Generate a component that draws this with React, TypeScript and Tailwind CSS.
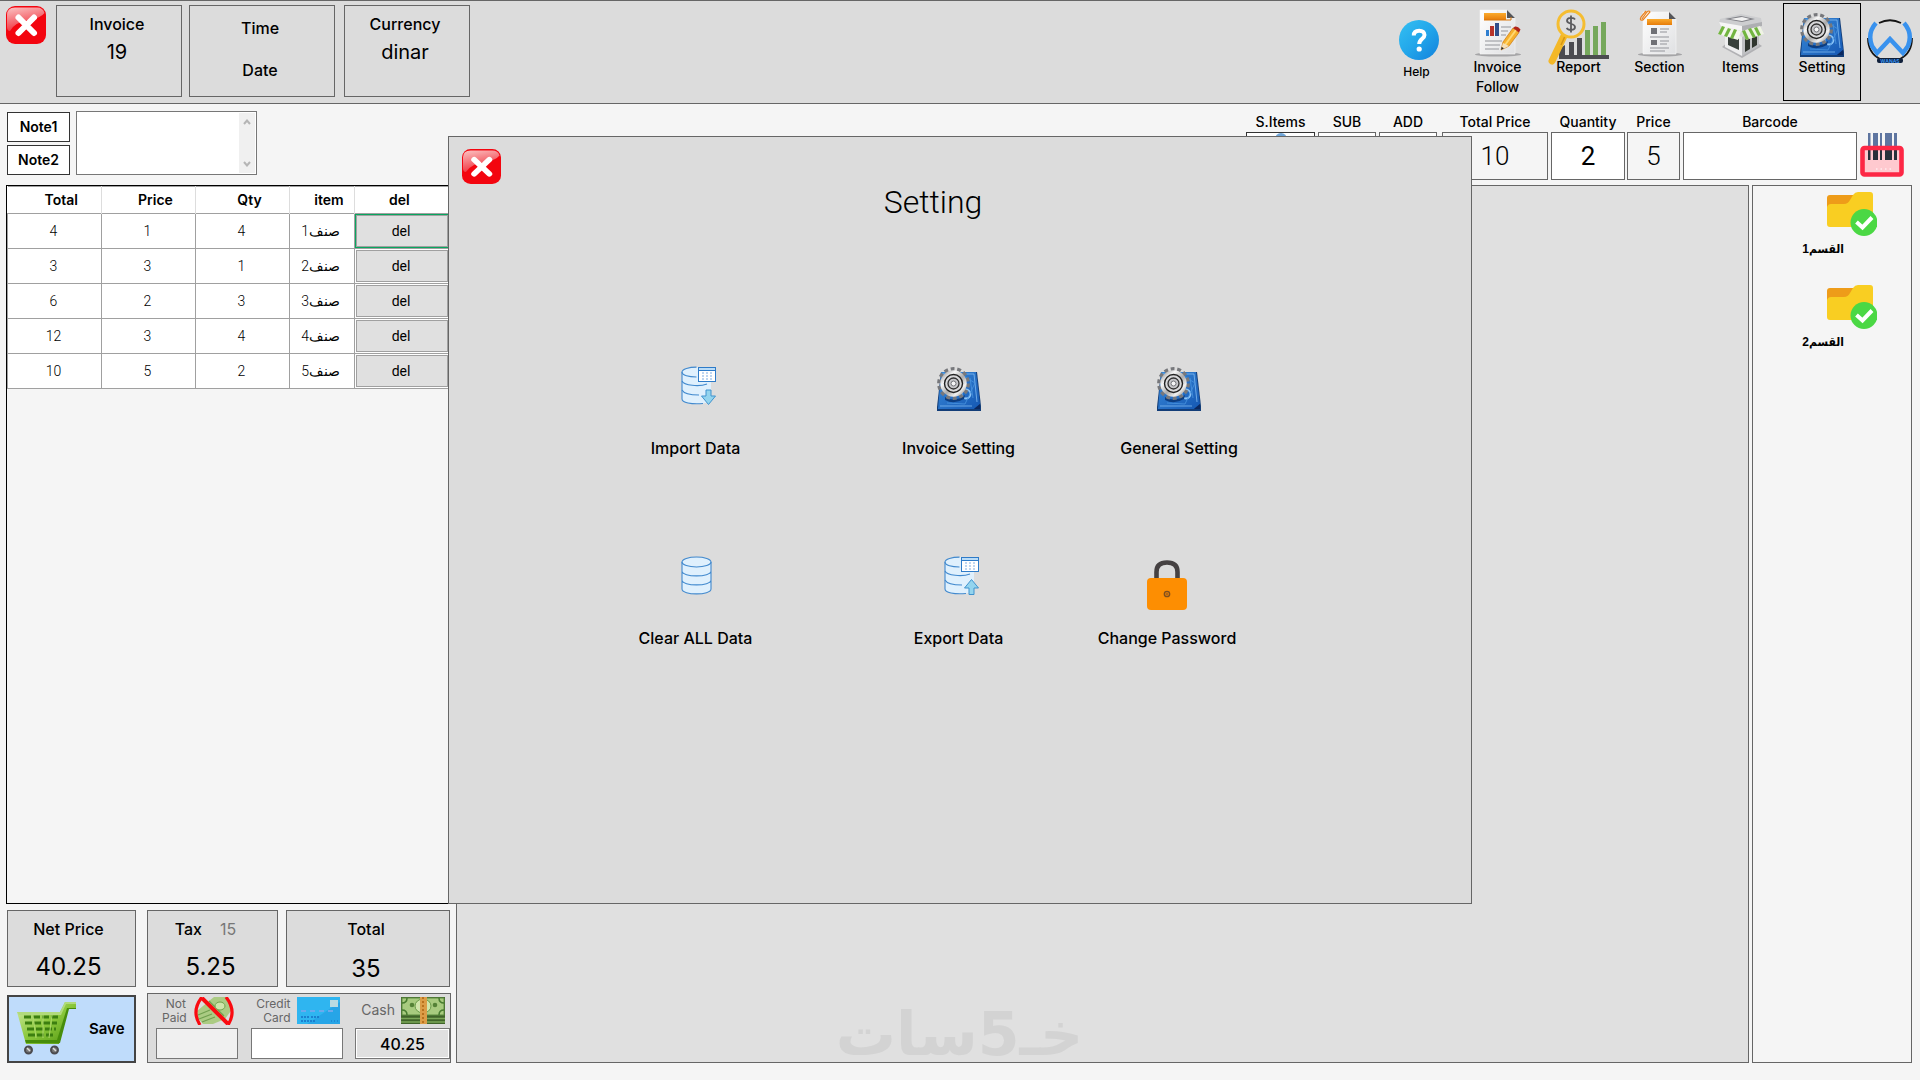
import React from "react";
import type { ReactNode } from "react";

const inter = "font-['Inter',sans-serif]";
const roboto = "font-['Roboto',sans-serif]";

function CloseIcon({ className }: { className: string }) {
  return (
    <svg viewBox="0 0 40 38" preserveAspectRatio="none" className={className} aria-hidden="true">
      <defs>
        <linearGradient id="gloss" x1="0" y1="0" x2="0.35" y2="1">
          <stop offset="0" stopColor="#fbc4c4" />
          <stop offset="1" stopColor="#f0303c" />
        </linearGradient>
      </defs>
      <rect width="40" height="38" rx="9" fill="#f3050f" />
      <path d="M1 21V9Q1 1.500 9 1.500H31Q37 1.500 38.500 7Q35 12 23 14Q9 16 4 25Q1 25 1 21Z" fill="url(#gloss)" />
      <path d="M12.500 11.500L28 27M28 11.500L12.500 27" stroke="#fff" strokeWidth="6" strokeLinecap="round" />
    </svg>
  );
}

function HelpIcon() {
  return (
    <svg viewBox="0 0 40 40" className="size-10" aria-hidden="true">
      <defs>
        <linearGradient id="help" x1="0" y1="0" x2="1" y2="1">
          <stop offset="0" stopColor="#34c0f2" />
          <stop offset="0.500" stopColor="#22a6ea" />
          <stop offset="1" stopColor="#1180dc" />
        </linearGradient>
      </defs>
      <circle cx="20" cy="20" r="20" fill="url(#help)" />
      <path d="M14.800 15.500C14.800 12.300 17 10.700 20.200 10.700C23.500 10.700 25.500 12.400 25.500 15C25.500 18.800 20.200 18.800 20.200 24" fill="none" stroke="#fff" strokeWidth="4" />
      <circle cx="20.200" cy="29" r="2.600" fill="#fff" />
    </svg>
  );
}

function PageDefs() {
  return (
    <defs>
      <linearGradient id="paper" x1="0" y1="0" x2="1" y2="1">
        <stop offset="0" stopColor="#ffffff" />
        <stop offset="1" stopColor="#dfe0e2" />
      </linearGradient>
      <linearGradient id="orangeBar" x1="0" y1="0" x2="0" y2="1">
        <stop offset="0" stopColor="#fbab2d" />
        <stop offset="1" stopColor="#e67c0b" />
      </linearGradient>
    </defs>
  );
}

function InvoiceIcon() {
  return (
    <svg viewBox="0 0 46 48" className="h-12 w-[46px]" aria-hidden="true">
      <PageDefs />
      <ellipse cx="23" cy="45.500" rx="23" ry="2" fill="#a5a5a7" />
      <path d="M5 1H32L40 9V45H5Z" fill="url(#paper)" stroke="#f7f7f7" strokeWidth="0.600" />
      <path d="M32 1L40 9H32Z" fill="#55565a" />
      <rect x="9" y="4" width="22" height="7" fill="url(#orangeBar)" />
      <path d="M9 11H36V8" fill="none" stroke="#d9780f" />
      <rect x="11" y="21" width="3" height="6" fill="#2f7fd0" />
      <rect x="15" y="17" width="4" height="10" fill="#b7332a" />
      <rect x="20" y="14" width="4" height="13" fill="#314f8c" />
      <g stroke="#b1b3b6" strokeWidth="1.400">
        <path d="M26 18H36M26 22H33M26 26H31M10 32H27M10 36H25M10 40H24" />
      </g>
      <path d="M26 41L28 33L38 19L44 23.500L34 37Z" fill="#f7b12d" stroke="#ca7711" strokeWidth="0.700" />
      <path d="M30 36L41 21" stroke="#ffd874" strokeWidth="2" />
      <path d="M38 19L40 17.500Q43 17 45.500 20.500L44 23.500Z" fill="#b12419" />
      <path d="M26 41L28 34L34 37Z" fill="#f5dfb8" />
      <path d="M26 41L26.600 38L29 39.300Z" fill="#222" />
    </svg>
  );
}

function ReportIcon() {
  return (
    <svg viewBox="0 0 62 57" className="h-[57px] w-[62px] shrink-0" aria-hidden="true">
      <g fill="#4b4b50">
        <path d="M11 46V40L17 36V46Z" />
        <rect x="21" y="33" width="5" height="13" />
        <rect x="29" y="29" width="5" height="17" />
        <rect x="11" y="46" width="50" height="4" />
      </g>
      <g fill="#76a85c">
        <rect x="37" y="21" width="5" height="25" />
        <rect x="45" y="17" width="5" height="29" />
        <rect x="53" y="13" width="5" height="33" />
      </g>
      <path d="M16 27L4 52" stroke="#f4b827" strokeWidth="7" strokeLinecap="round" />
      <path d="M18 25L13 36" stroke="#d69512" strokeWidth="1.500" />
      <circle cx="23" cy="15" r="13" fill="#dedede" stroke="#f5bd31" strokeWidth="3" />
      <path d="M27 10.500C26 8.500 19 8 19 11.800C19 15.500 27 14 27 18C27 22 20 21.500 18.700 18.800M23 6.500V23.500" fill="none" stroke="#5b5b5e" strokeWidth="1.800" />
    </svg>
  );
}

function SectionIcon() {
  return (
    <svg viewBox="0 0 44 48" className="h-12 w-11" aria-hidden="true">
      <PageDefs />
      <ellipse cx="22" cy="45.500" rx="22" ry="2" fill="#a5a5a7" />
      <path d="M5 3H31L38 10V45H5Z" fill="url(#paper)" stroke="#f9f9f9" strokeWidth="0.600" />
      <path d="M31 3L38 10H31Z" fill="#55565a" />
      <rect x="9" y="10" width="25" height="6" fill="url(#orangeBar)" />
      <rect x="13" y="19" width="6" height="6" fill="#707176" />
      <rect x="13" y="31" width="6" height="5" fill="#707176" />
      <path d="M22 20H31M22 23H29M22 32H31M22 35H29M12 28H31M12 39H31M12 42H27" stroke="#b0b1b5" strokeWidth="1.300" />
      <path d="M4 10L9 3Q11 1 12 3L5 11Q1 12 3 8L8 2" fill="none" stroke="#ea8320" strokeWidth="1.200" />
    </svg>
  );
}

function ShopIcon() {
  return (
    <svg viewBox="0 0 46 46" className="mt-1 h-[46px] w-[46px]" aria-hidden="true">
      <path d="M4 34L24 45L44 33L38 29L10 29Z" fill="#b1b1b4" />
      <path d="M7 17L24 24V43L7 34Z" fill="#ededee" />
      <path d="M24 24L41 16V33L24 43Z" fill="#bfc0c3" />
      <path d="M10 22L21 26V37L10 32Z" fill="#38403b" />
      <path d="M27 25L32 22V36L27 39ZM34 22L39 19V32L34 35Z" fill="#30362f" />
      <path d="M2 6L23 1L43 5L44 10L24 15L1 10Z" fill="#cdced0" />
      <path d="M7 6L23 3L37 6L24 9Z" fill="#808187" />
      <path d="M12 6L24 4L32 6L24 8Z" fill="#f2f2f2" />
      <path d="M1 9L24 13V18L3 13Z" fill="#f6f6f6" />
      <path d="M24 13L44 9V13L24 18Z" fill="#aeafb2" />
      <path d="M4 13L23 18L20 27L0 21Z" fill="#f5f8ed" />
      <path d="M24 18L42 13L46 21L28 27Z" fill="#eff4e4" />
      <g fill="#72b540">
        <path d="M4 13L7 14L3 22L0 21Z" />
        <path d="M10 15L13 16L9 24L6 23Z" />
        <path d="M16 16L19 17L15 26L12 25Z" />
        <path d="M24 18L27 17L31 26L28 27Z" />
        <path d="M30 16L33 15L38 24L35 25Z" />
        <path d="M36 15L39 14L43 22L40 23Z" />
      </g>
    </svg>
  );
}

function SettingIcon() {
  return (
    <svg viewBox="0 0 44 46" className="h-[46px] w-11" aria-hidden="true">
      <defs>
        <linearGradient id="board" x1="0" y1="0" x2="1" y2="1">
          <stop offset="0" stopColor="#3a8ad8" />
          <stop offset="1" stopColor="#1558b4" />
        </linearGradient>
        <linearGradient id="steel" x1="0" y1="0" x2="1" y2="1">
          <stop offset="0" stopColor="#77787b" />
          <stop offset="0.300" stopColor="#f8f8f8" />
          <stop offset="0.550" stopColor="#aaa" />
          <stop offset="0.750" stopColor="#f1f1f1" />
          <stop offset="1" stopColor="#666" />
        </linearGradient>
      </defs>
      <path d="M4 6L40 6L44 40V45H0V41Z" fill="#123d78" />
      <path d="M4 6L39 6L43 38L37 43H1Z" fill="url(#board)" />
      <path d="M5 8L37 8L40 36M3 40H35" fill="none" stroke="#80baf0" strokeWidth="0.800" />
      <path d="M37 43L43 38V43Z" fill="#0b2860" />
      <circle cx="29" cy="28" r="4.500" fill="none" stroke="#8cc4f6" strokeWidth="1.800" />
      <path d="M25 9L38 17L28 38L10 37M33 12L36 32" fill="none" stroke="#4a96e0" strokeWidth="0.800" />
      <path d="M8 31Q18 37 28 29L27 33Q17 39 8 34Z" fill="#0c3d80" />
      <circle cx="16.500" cy="17.500" r="14.500" fill="none" stroke="#77787c" strokeWidth="3.800" strokeDasharray="3.800 2.710" />
      <circle cx="16.500" cy="17.500" r="13.200" fill="url(#steel)" />
      <circle cx="16.500" cy="17.500" r="9" fill="#d8d8da" stroke="#222" strokeWidth="1.400" />
      <circle cx="16.500" cy="17.500" r="5.500" fill="#c5c5c8" stroke="#303030" strokeWidth="1.300" />
      <circle cx="16.500" cy="17.500" r="2.500" fill="#f6f6f6" stroke="#74757a" />
    </svg>
  );
}

function WanasLogo() {
  return (
    <svg viewBox="0 0 46 46" className="size-[46px]" role="img" aria-label="Wanas">
      <path d="M12 4Q23 -1.500 34 4M1 19Q1 34 13 40M45 19Q45 34 33 40" fill="none" stroke="#151515" strokeWidth="1.800" />
      <path d="M9 4Q0 14 5 27L10 34L23 20L36 34L41 27Q46 14 37 4" fill="none" stroke="#3992ee" strokeWidth="4.500" />
      <rect x="10" y="39" width="26" height="5" rx="2" fill="#10203a" />
      <text x="23" y="43.500" textAnchor="middle" fontSize="5" fontWeight="700" fontFamily="Inter, sans-serif" fill="#3992ee">WANAS</text>
    </svg>
  );
}

function DatabaseIcon({ arrow }: { arrow?: "down" | "up" }) {
  return (
    <svg viewBox="0 0 36 40" className="h-10 w-9" aria-hidden="true">
      <path d="M1 6C1 -0.500 30 -0.500 30 6V33C30 39.500 1 39.500 1 33Z" fill="#dff0fd" />
      <g fill="none" stroke="#4189ce" strokeWidth="1.100">
        {arrow ? (
          <>
            <path d="M15.500 1.100C8 1.100 1 3 1 6V33C1 36.500 10 38.500 22 37.500" />
            <path d="M1 6C1 9.500 8 11 15.500 11M1 15C3 19.500 18 21 26 18M1 24C3 28 10 29 18 29" />
          </>
        ) : (
          <>
            <ellipse cx="15.500" cy="6" rx="14.500" ry="5" />
            <path d="M1 6V33C1 39.500 30 39.500 30 33V6M1 15C1 21.500 30 21.500 30 15M1 24C1 30.500 30 30.500 30 24" />
          </>
        )}
      </g>
      {arrow && (
        <>
          <rect x="17.500" y="1.500" width="17" height="14" fill="#fff" stroke="#2e7bc8" />
          <path d="M18 2H34V4H18Z" fill="#b9dcf8" />
          <path d="M17.500 4.500H34.500" stroke="#2e7bc8" />
          <path d="M21 7H31M21 10H31M21 13H31" stroke="#a9c9ed" strokeWidth="1.600" strokeDasharray="2 2" />
          <path
            d={arrow === "down" ? "M25 24H30V30H34.500L27.500 38.500L20.500 30H25Z" : "M25 38.500H30V32H34.500L27.500 23.500L20.500 32H25Z"}
            fill="#93d4ee"
            stroke="#3f93ce"
          />
        </>
      )}
    </svg>
  );
}

function LockIcon() {
  return (
    <svg viewBox="0 0 40 50" className="mt-1 h-[50px] w-10" aria-hidden="true">
      <path d="M9.500 20V12Q9.500 2.500 20 2.500T30.500 12V20" fill="none" stroke="#454142" strokeWidth="4.600" />
      <rect y="18" width="40" height="32" rx="4" fill="#fd8e02" />
      <circle cx="20" cy="34" r="2.700" fill="#dd7c0c" stroke="#80501d" strokeWidth="1.300" />
      <circle cx="20" cy="34" r="0.800" fill="#80501d" />
    </svg>
  );
}

function BarcodeIcon() {
  return (
    <svg viewBox="0 0 44 46" className="h-[46px] w-11 shrink-0" aria-hidden="true">
      <rect x="2" y="16" width="40" height="27" fill="#ffc9cf" />
      <path d="M8 1H10.500V14H8ZM13 1H18V14H13ZM20 1H22V14H20ZM25 1H32V14H25ZM34 1H37V14H34Z" fill="#5e75a0" />
      <path d="M8 17H10.500V28H8ZM13 17H18V28H13ZM20 17H22V28H20ZM25 17H32V28H25ZM34 17H37V28H34Z" fill="#28303a" />
      <rect x="2.500" y="16" width="39" height="26.500" rx="2" fill="none" stroke="#fd2745" strokeWidth="4.600" />
      <path d="M16 37H31" stroke="#fff" strokeDasharray="1.500 3" />
    </svg>
  );
}

function FolderIcon() {
  return (
    <svg viewBox="0 0 50 46" className="h-[46px] w-[50px]" aria-hidden="true">
      <path d="M0 7Q0 4 3 4H26V20H0Z" fill="#ee9c19" />
      <path d="M0 16Q1 13 4 13H17Q21 13 23 9L26 4Q28 1 31 1H43Q46 1 46 4V33Q46 36 43 36H3Q0 36 0 33Z" fill="#f9ce22" />
      <circle cx="37" cy="31.500" r="13.500" fill="#4bd844" />
      <path d="M29.500 31L35.500 36.500L45 26.500" fill="none" stroke="#fff" strokeWidth="4" />
    </svg>
  );
}

function CartIcon() {
  return (
    <svg viewBox="0 0 60 56" className="h-14 w-[60px] shrink-0" aria-hidden="true">
      <defs>
        <linearGradient id="cart" x1="0" y1="0" x2="1" y2="1">
          <stop offset="0" stopColor="#d5eda9" />
          <stop offset="0.500" stopColor="#8bc83c" />
          <stop offset="1" stopColor="#4f940e" />
        </linearGradient>
      </defs>
      <path d="M0 11H43L48 1H59V7H51L42 43H9Z" fill="url(#cart)" />
      <path d="M48 1H59V3H49L44 14H2L0 11H43Z" fill="#b1da7c" />
      <path d="M50 7H59V8H52L43 42H9L8 39H40Z" fill="#478d0b" />
      <g stroke="#3c7f10" strokeWidth="3" strokeDasharray="7 2">
        <path d="M7 16H42" />
        <path d="M8 22H40" />
        <path d="M10 28H39" />
        <path d="M11 34H37" />
      </g>
      <path d="M16 14L19 37M26 14V37M35 14L32 37" stroke="#abd76a" strokeWidth="1" />
      <g fill="#777" stroke="#4b4b4f" strokeWidth="2">
        <circle cx="11.500" cy="49" r="3.500" />
        <circle cx="37.500" cy="49" r="3.500" />
      </g>
      <path d="M10 47L13 50M36 47L39 50" stroke="#ddd" strokeWidth="1.500" />
    </svg>
  );
}

function NotPaidIcon() {
  return (
    <svg viewBox="0 0 40 28" className="h-7 w-10" aria-hidden="true">
      <path d="M4 21L3 14L15 4L20 0H32L39 11L31 22L19 27L9 27Z" fill="#abcb83" />
      <path d="M15 4L30 19M4 18L16 13M5 22L18 17M8 25L21 20" stroke="#719f4f" strokeWidth="1.200" />
      <ellipse cx="26" cy="9" rx="5" ry="4" fill="#cee5aa" stroke="#72a34e" />
      <path d="M8 0Q-3 14 6 28M32 0Q43 14 34 28" fill="none" stroke="#fa0a10" strokeWidth="3.200" />
      <path d="M8 1L34 27" stroke="#fa0a10" strokeWidth="4" />
    </svg>
  );
}

function CardIcon() {
  return (
    <svg viewBox="0 0 43 27" className="h-[27px] w-[43px]" aria-hidden="true">
      <rect width="43" height="27" fill="#2fb5f0" />
      <path d="M43 5V27H10Z" fill="#26a5e7" />
      <rect x="33" y="3" width="8" height="7" fill="#b9dbe2" />
      <path d="M4 14H40" stroke="#6ba9ed" strokeWidth="2" strokeDasharray="5 4" />
      <path d="M4 20H12M14 20H23M4 24H18" stroke="#1670c5" strokeWidth="1.500" strokeDasharray="2 1" />
      <path d="M34 24H42" stroke="#1670c5" strokeDasharray="1 2" />
    </svg>
  );
}

function CashIcon() {
  return (
    <svg viewBox="0 0 44 27" className="h-[27px] w-11" aria-hidden="true">
      <rect width="44" height="27" fill="#40642a" />
      <rect x="1" y="1" width="42" height="17" fill="#a8cb7f" stroke="#5e8d42" />
      <path d="M1 6Q6 6 6 1M38 1Q38 6 43 6M1 13Q6 13 6 18M38 18Q38 13 43 13" fill="none" stroke="#487c30" strokeWidth="1.500" />
      <ellipse cx="22" cy="9" rx="8" ry="7" fill="#d1e5ab" stroke="#699b48" />
      <circle cx="11" cy="8" r="2.300" fill="#558237" />
      <circle cx="34" cy="8" r="2.300" fill="#558237" />
      <path d="M0 21.500H44M0 25H44" stroke="#7ba659" strokeWidth="1.300" />
      <rect x="19" width="7" height="27" fill="#dc9c47" />
      <path d="M22 0V27" stroke="#b8711e" strokeWidth="2" strokeDasharray="2 2" />
    </svg>
  );
}

function ToolButton({ label, icon }: { label: string; icon: ReactNode }) {
  return (
    <button type="button" className="flex w-[81px] flex-col items-center pt-2">
      <span className="flex h-12 justify-center">{icon}</span>
      <span className="relative w-16 text-center text-sm leading-5 font-medium">{label}</span>
    </button>
  );
}

function Field({ label, id, width, children }: { label: string; id: string; width: string; children: ReactNode }) {
  return (
    <div className={`flex flex-col ${width}`}>
      <label htmlFor={id} className="h-[22px] text-center text-sm leading-6 font-medium whitespace-nowrap">
        {label}
      </label>
      {children}
    </div>
  );
}

function DialogAction({ label, icon, className = "" }: { label: string; icon: ReactNode; className?: string }) {
  return (
    <button type="button" className={`flex flex-col items-center ${className}`}>
      <span className="flex h-[70px] items-start">{icon}</span>
      <span className="text-base leading-6 font-medium whitespace-nowrap">{label}</span>
    </button>
  );
}

const rows = [
  { total: 4, price: 1, qty: 4, item: "صنف1" },
  { total: 3, price: 3, qty: 1, item: "صنف2" },
  { total: 6, price: 2, qty: 3, item: "صنف3" },
  { total: 12, price: 3, qty: 4, item: "صنف4" },
  { total: 10, price: 5, qty: 2, item: "صنف5" },
];

function TopBar() {
  return (
    <header className="flex h-[104px] shrink-0 justify-between border-y border-[#666] bg-[#dcdcdc] pr-[7px] pl-1.5">
      <div className="flex items-start pt-1">
        <button type="button" aria-label="Close" className="pt-px">
          <CloseIcon className="h-[38px] w-10" />
        </button>
        <div className="ml-2.5 flex h-[92px] w-[126px] flex-col items-center border border-[#666] pt-1.5 pr-1">
          <span className="text-base leading-6 font-medium">Invoice</span>
          <span className="text-xl leading-8">19</span>
        </div>
        <div className="ml-[7px] flex h-[92px] w-[146px] flex-col items-center gap-[18px] border border-[#666] pt-2.5 pr-1">
          <span className="text-base leading-6 font-medium">Time</span>
          <span className="text-base leading-6 font-medium">Date</span>
        </div>
        <div className="ml-[9px] flex h-[92px] w-[126px] flex-col items-center border border-[#666] pt-1.5 pr-1">
          <span className="text-base leading-6 font-medium">Currency</span>
          <span className="text-xl leading-8">dinar</span>
        </div>
      </div>
      <nav className="flex items-start">
        <button type="button" className="flex w-[81px] flex-col items-center pt-[19px]">
          <span className="pl-1">
            <HelpIcon />
          </span>
          <span className="text-xs leading-6 font-medium">Help</span>
        </button>
        <ToolButton label="Invoice Follow" icon={<InvoiceIcon />} />
        <ToolButton label="Report" icon={<ReportIcon />} />
        <ToolButton label="Section" icon={<SectionIcon />} />
        <ToolButton label="Items" icon={<ShopIcon />} />
        <button type="button" className="mt-0.5 ml-0.5 flex h-[98px] w-[78px] flex-col items-center border border-black pt-2">
          <span className="h-[45px]">
            <SettingIcon />
          </span>
          <span className="text-sm leading-5 font-medium">Setting</span>
        </button>
        <div className="mt-[18px] ml-1.5">
          <WanasLogo />
        </div>
      </nav>
    </header>
  );
}

function Notes() {
  return (
    <div className="flex h-[81px] items-start gap-1.5 pt-[7px] pl-px">
      <div className="flex flex-col gap-[3px] pt-px">
        <button type="button" className="h-[30px] w-[63px] border border-[#333] bg-white text-sm font-semibold">Note1</button>
        <button type="button" className="h-[30px] w-[63px] border border-[#333] bg-white text-sm font-semibold">Note2</button>
      </div>
      <div className="flex h-16 w-[181px] border border-[#777] bg-white p-px">
        <textarea aria-label="Note" className="min-w-0 flex-1 resize-none overflow-hidden outline-none" />
        <div className="flex w-4 flex-col items-center justify-between bg-[#f0f0f0] py-1.5 text-[#b5b5b5]">
          <svg viewBox="0 0 8 6" className="h-1.5 w-2" aria-hidden="true">
            <path d="M1 5L4 1.500L7 5" fill="none" stroke="currentColor" strokeWidth="2" />
          </svg>
          <svg viewBox="0 0 8 6" className="h-1.5 w-2" aria-hidden="true">
            <path d="M1 1L4 4.500L7 1" fill="none" stroke="currentColor" strokeWidth="2" />
          </svg>
        </div>
      </div>
    </div>
  );
}

function OrderTable() {
  const head = "border-r border-[#ddd] pl-3.5 text-center font-semibold";
  const cell = `border border-[#a0a0a0] text-center font-light ${roboto}`;
  return (
    <div className="flex-1 border border-black">
      <table className="w-full table-fixed border-collapse bg-white text-sm">
        <colgroup>
          <col className="w-[94px]" />
          <col className="w-[94px]" />
          <col className="w-[94px]" />
          <col className="w-[65px]" />
          <col />
        </colgroup>
        <thead>
          <tr className="h-[27px] border-t border-[#a0a0a0]">
            <th className={head}>Total</th>
            <th className={head}>Price</th>
            <th className={head}>Qty</th>
            <th className={head}>item</th>
            <th className="pr-1.5 text-center font-semibold">del</th>
          </tr>
        </thead>
        <tbody>
          {rows.map((row, index) => (
            <tr key={row.item} className="h-[35px]">
              <td className={`${cell} pr-0.5`}>{row.total}</td>
              <td className={`${cell} pr-0.5`}>{row.price}</td>
              <td className={`${cell} pr-0.5`}>{row.qty}</td>
              <td dir="rtl" className="border border-[#a0a0a0] pr-3.5 text-right font-['Roboto','DejaVu_Sans',sans-serif] text-sm font-light whitespace-nowrap">
                {row.item}
              </td>
              <td className="border border-[#a0a0a0] p-0">
                <button
                  type="button"
                  className={
                    index === 0
                      ? `block h-[34px] w-full border border-[#08a65f] bg-[#e0e0e0] pr-0.5 outline-1 -outline-offset-2 outline-[#a0a0a0] ${roboto}`
                      : `block h-[34px] w-full border border-white bg-[#e0e0e0] pr-0.5 outline-1 -outline-offset-2 outline-[#a0a0a0] ${roboto}`
                  }
                >
                  del
                </button>
              </td>
            </tr>
          ))}
        </tbody>
      </table>
    </div>
  );
}

function Totals() {
  const box = "flex h-[77px] flex-col items-center border border-[#666] bg-[#dcdcdc] pt-1.5";
  return (
    <div className="mt-1.5 flex px-px">
      <div className={`${box} w-[129px] pr-1.5`}>
        <span className="text-base leading-6 font-medium">Net Price</span>
        <span className="mt-2.5 text-2xl leading-8">40.25</span>
      </div>
      <div className={`${box} ml-[11px] w-[131px] pr-1`}>
        <span className="flex gap-[18px] pr-2.5 text-base leading-6 font-medium">
          Tax <span className="font-normal text-[#777]">15</span>
        </span>
        <span className="mt-2.5 text-2xl leading-8">5.25</span>
      </div>
      <div className={`${box} ml-2 flex-1 pr-1`}>
        <span className="text-base leading-6 font-medium">Total</span>
        <span className="mt-3 text-2xl leading-8">35</span>
      </div>
    </div>
  );
}

function Payment() {
  return (
    <div className="mt-1.5 flex pl-px">
      <button type="button" className="mt-0.5 flex h-[68px] w-[129px] items-center gap-3 border-2 border-[#444] bg-[#bfdcfb] pl-2">
        <CartIcon />
        <span className="text-[15px] font-semibold">Save</span>
      </button>
      <div className="ml-[11px] flex h-[70px] flex-1 justify-between border border-[#666] bg-[#dcdcdc] pt-[3px] pl-2 text-[#666]">
        <div className="w-[82px]">
          <div className="flex h-[31px] items-start gap-2 pl-1.5">
            <label htmlFor="notpaid" className="w-6 text-right text-xs leading-[14px]">Not Paid</label>
            <NotPaidIcon />
          </div>
          <input id="notpaid" className="block h-[31px] w-full border border-[#777] bg-[#f0f0f0] px-1" />
        </div>
        <div className="w-[92px]">
          <div className="flex h-[31px] items-start justify-end gap-1.5 pr-[3px]">
            <label htmlFor="credit" className="w-9 text-right text-xs leading-[14px]">Credit Card</label>
            <CardIcon />
          </div>
          <input id="credit" className="block h-[31px] w-full border border-[#777] bg-white px-1" />
        </div>
        <div className="w-[95px]">
          <div className="flex h-[31px] items-start justify-end gap-1.5 pr-[5px]">
            <label htmlFor="cash" className="text-sm leading-[26px]">Cash</label>
            <CashIcon />
          </div>
          <input
            id="cash"
            defaultValue="40.25"
            className="block h-[31px] w-full border border-[#777] bg-[#e0e0e0] text-center text-base font-medium text-black outline-1 -outline-offset-2 outline-white"
          />
        </div>
      </div>
    </div>
  );
}

function EntryRow() {
  const box = "h-12 w-full border border-[#666] text-center text-[26px] text-black";
  return (
    <div className="flex h-[81px] justify-end gap-[3px] pt-1.5 pr-2">
      <Field label="S.Items" id="sitems" width="w-[69px]">
        <button type="button" id="sitems" className="h-12 border border-[#333] bg-white" aria-label="S.Items">
          <span className="mx-auto block h-full w-3 rounded-full bg-[#6fa5d8]" />
        </button>
      </Field>
      <Field label="SUB" id="sub" width="w-[58px]">
        <button type="button" id="sub" className="h-12 border border-[#666] bg-white" aria-label="SUB" />
      </Field>
      <Field label="ADD" id="add" width="w-[58px]">
        <button type="button" id="add" className="h-12 border border-[#666] bg-white" aria-label="ADD" />
      </Field>
      <Field label="Total Price" id="totalprice" width="w-[106px] ml-0.5">
        <input id="totalprice" defaultValue="10" className={`${box} ${roboto} bg-[#f5f5f5] font-light`} />
      </Field>
      <Field label="Quantity" id="quantity" width="w-[74px]">
        <input id="quantity" defaultValue="2" className={`${box} ${roboto} bg-white`} />
      </Field>
      <Field label="Price" id="price" width="w-[53px] -ml-px">
        <input id="price" defaultValue="5" className={`${box} ${roboto} bg-[#f5f5f5] font-light`} />
      </Field>
      <Field label="Barcode" id="barcode" width="w-[174px]">
        <input id="barcode" className={`${box} bg-white px-2`} />
      </Field>
      <div className="flex w-[52px] pt-[22px]">
        <BarcodeIcon />
      </div>
    </div>
  );
}

function SettingDialog() {
  return (
    <div
      role="dialog"
      aria-label="Setting"
      className="absolute inset-x-0 top-[136px] mx-auto min-h-[768px] w-[1024px] max-w-full border border-[#666] bg-[#dcdcdc]"
    >
      <button type="button" aria-label="Close setting" className="mt-3 ml-[13px] block">
        <CloseIcon className="h-[35px] w-[39px]" />
      </button>
      <h1 className={`pr-[54px] text-center text-[32px] leading-9 font-light ${roboto}`}>Setting</h1>
      <div className="mt-[146px] ml-[115px] grid grid-cols-[263px_263px_178px] gap-y-24">
        <DialogAction label="Import Data" icon={<span className="pl-1.5"><DatabaseIcon arrow="down" /></span>} />
        <DialogAction label="Invoice Setting" icon={<SettingIcon />} />
        <DialogAction label="General Setting" icon={<SettingIcon />} />
        <DialogAction label="Clear ALL Data" icon={<span className="pl-1.5"><DatabaseIcon /></span>} />
        <DialogAction label="Export Data" icon={<span className="pl-1.5"><DatabaseIcon arrow="up" /></span>} />
        <DialogAction label="Change Password" icon={<LockIcon />} className="pr-6" />
      </div>
    </div>
  );
}

export default function App() {
  return (
    <div className={`relative flex min-h-screen flex-col bg-[#f5f5f5] text-black ${inter}`}>
      <TopBar />
      <div className="flex flex-1 gap-[5px] pb-[17px] pl-1.5">
        <section className="flex w-[445px] shrink-0 flex-col">
          <Notes />
          <OrderTable />
          <Totals />
          <Payment />
        </section>
        <section className="flex min-w-0 flex-1 flex-col">
          <EntryRow />
          <div className="flex flex-1 gap-[3px] pr-2">
            <main className="flex flex-1 items-end justify-center border border-[#666] bg-[#e0e0e0]">
              <span dir="rtl" className="h-14 pr-[286px] font-['DejaVu_Sans',sans-serif] text-6xl leading-[56px] font-bold text-[#d3d3d3]">
                خـ5سات
              </span>
            </main>
            <aside className="flex w-40 flex-col gap-[29px] border border-[#666] pt-[5px]">
              {["القسم1", "القسم2"].map((name) => (
                <button key={name} type="button" className="flex h-16 flex-col">
                  <span className="pl-[74px]">
                    <FolderIcon />
                  </span>
                  <span dir="rtl" className="mt-0.5 w-full pr-[67px] text-right font-['Liberation_Sans','DejaVu_Sans_Condensed','DejaVu_Sans',sans-serif] text-xs leading-5 font-bold">
                    {name}
                  </span>
                </button>
              ))}
            </aside>
          </div>
        </section>
      </div>
      <SettingDialog />
    </div>
  );
}
